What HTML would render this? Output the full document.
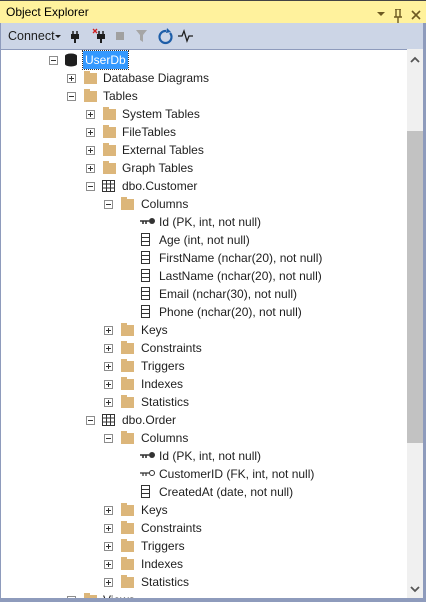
<!DOCTYPE html>
<html><head><style>
*{margin:0;padding:0;box-sizing:border-box}
body{width:426px;height:602px;overflow:hidden;background:#fff;font-family:"Liberation Sans",sans-serif;font-size:12px;color:#1e1e1e;position:relative}
#frame{position:absolute;left:0;top:0;width:426px;height:602px;border:1px solid #8e9bbc;border-top:0}
#title{position:absolute;left:0;top:0;width:426px;height:23px;background:#fff29d;border-top:1px solid #444}
#title span{position:absolute;left:6px;top:4px;font-size:12px;color:#000}
#tb{position:absolute;left:0;top:23px;width:426px;height:26px;background:#ccd5e6}
#tree{position:absolute;left:1px;top:49px;width:406px;height:550px;background:#fff;border-top:1px solid #8e9bbc;overflow:hidden}
#sb{position:absolute;left:407px;top:49px;width:16px;height:550px;background:#f0f0f0}
#thumb{position:absolute;left:407px;top:131px;width:16px;height:312px;background:#c2c2c2}
#bot{position:absolute;left:0;top:598px;width:426px;height:4px;background:#8e9bbc}
.r{position:absolute;height:18px;line-height:18px;white-space:nowrap}
.ex{position:absolute;width:9px;height:9px;border:1px solid #8d8d8d;background:#fff}
.ex:before{content:"";position:absolute;left:1px;top:3px;width:5px;height:1px;background:#333}
.ex.p:after{content:"";position:absolute;left:3px;top:1px;width:1px;height:5px;background:#333}
.fo{position:absolute;width:13px;height:11px;background:#dcb67a}
.fo:before{content:"";position:absolute;left:0;top:-2px;width:6px;height:2px;background:#dcb67a}
.t{position:absolute}
</style></head><body>
<div id="title"><span>Object Explorer</span>
<svg style="position:absolute;left:376px;top:8px" width="46" height="14"><path d="M1 3h8l-4 4z" fill="#6d5a22"/><path d="M19 0h6M20 0v8M24 0v8M18 8h8M22 8v6" stroke="#6d5a22" stroke-width="1.4" fill="none"/><path d="M36 2l8 8M44 2l-8 8" stroke="#6d5a22" stroke-width="1.6"/></svg></div>
<div id="tb">
<span style="position:absolute;left:8px;top:6px;font-size:12.5px;color:#1e1e1e">Connect</span>
<svg style="position:absolute;left:55px;top:12px" width="8" height="5"><path d="M0 0h6l-3 3z" fill="#1e1e1e"/></svg>
<svg style="position:absolute;left:70px;top:4px" width="140" height="18">
<path d="M3 4v4M7 4v4" stroke="#1e1e1e" stroke-width="1.5"/><rect x="1" y="7" width="8" height="5" fill="#1e1e1e"/><rect x="4" y="11" width="2" height="5" fill="#1e1e1e"/>
<path d="M23 2l4 4M27 2l-4 4" stroke="#d02020" stroke-width="1.3"/><path d="M29 4v4M33 4v4" stroke="#1e1e1e" stroke-width="1.5"/><rect x="27" y="7" width="8" height="5" fill="#1e1e1e"/><rect x="30" y="11" width="2" height="5" fill="#1e1e1e"/>
<rect x="46" y="5" width="8" height="8" fill="#a0a0a0"/>
<path d="M66 3h11l-4 5v7l-3-2v-5z" fill="#a6a6a6"/>
<path d="M96 4a6 6 0 1 0 4 2" stroke="#1e5ea8" stroke-width="2.2" fill="none"/><path d="M97 1l4 4-5 1z" fill="#1e5ea8"/>
<path d="M108 9h4l2-5 3 10 2-5h4" stroke="#1e1e1e" stroke-width="1.3" fill="none"/>
</svg></div>
<div id="tree">
<!-- rows injected -->
<div class="ex" style="left:48px;top:6px"></div>
<svg style="position:absolute;left:63px;top:3px" width="14" height="14"><ellipse cx="7" cy="3" rx="6" ry="2.5" fill="#1e1e1e"/><rect x="1" y="3" width="12" height="8" fill="#1e1e1e"/><ellipse cx="7" cy="11" rx="6" ry="2.5" fill="#1e1e1e"/></svg>
<div class="r" style="left:82px;top:1px;background:#3399ff;color:#fff;padding:0 2px;height:18px;outline:1px dotted #333">UserDb</div>

<div class="ex p" style="left:66px;top:24px"></div><div class="fo" style="left:83px;top:23px"></div><div class="r t" style="left:102px;top:19px">Database Diagrams</div>
<div class="ex" style="left:66px;top:42px"></div><div class="fo" style="left:83px;top:41px"></div><div class="r t" style="left:102px;top:37px">Tables</div>
<div class="ex p" style="left:85px;top:60px"></div><div class="fo" style="left:102px;top:59px"></div><div class="r t" style="left:121px;top:55px">System Tables</div>
<div class="ex p" style="left:85px;top:78px"></div><div class="fo" style="left:102px;top:77px"></div><div class="r t" style="left:121px;top:73px">FileTables</div>
<div class="ex p" style="left:85px;top:96px"></div><div class="fo" style="left:102px;top:95px"></div><div class="r t" style="left:121px;top:91px">External Tables</div>
<div class="ex p" style="left:85px;top:114px"></div><div class="fo" style="left:102px;top:113px"></div><div class="r t" style="left:121px;top:109px">Graph Tables</div>
<div class="ex" style="left:85px;top:132px"></div>
<svg style="position:absolute;left:101px;top:130px" width="14" height="13"><rect x="0.5" y="0.5" width="12" height="11" fill="none" stroke="#333"/><path d="M0 4h13M0 8h13M4.5 1v11M8.5 1v11" stroke="#333"/></svg>
<div class="r t" style="left:121px;top:127px">dbo.Customer</div>
<div class="ex" style="left:103px;top:150px"></div><div class="fo" style="left:120px;top:149px"></div><div class="r t" style="left:140px;top:145px">Columns</div>

<svg style="position:absolute;left:139px;top:167px" width="16" height="8"><path d="M0 4h9M3 4v3M6 4v3" stroke="#333" stroke-width="1.6"/><circle cx="12" cy="4" r="3" fill="#333"/></svg>
<div class="r t" style="left:158px;top:163px">Id (PK, int, not null)</div>
<div class="r t" style="left:158px;top:181px">Age (int, not null)</div>
<div class="r t" style="left:158px;top:199px">FirstName (nchar(20), not null)</div>
<div class="r t" style="left:158px;top:217px">LastName (nchar(20), not null)</div>
<div class="r t" style="left:158px;top:235px">Email (nchar(30), not null)</div>
<div class="r t" style="left:158px;top:253px">Phone (nchar(20), not null)</div>

<div class="ex p" style="left:103px;top:276px"></div><div class="fo" style="left:120px;top:275px"></div><div class="r t" style="left:140px;top:271px">Keys</div>
<div class="ex p" style="left:103px;top:294px"></div><div class="fo" style="left:120px;top:293px"></div><div class="r t" style="left:140px;top:289px">Constraints</div>
<div class="ex p" style="left:103px;top:312px"></div><div class="fo" style="left:120px;top:311px"></div><div class="r t" style="left:140px;top:307px">Triggers</div>
<div class="ex p" style="left:103px;top:330px"></div><div class="fo" style="left:120px;top:329px"></div><div class="r t" style="left:140px;top:325px">Indexes</div>
<div class="ex p" style="left:103px;top:348px"></div><div class="fo" style="left:120px;top:347px"></div><div class="r t" style="left:140px;top:343px">Statistics</div>
<div class="ex" style="left:85px;top:366px"></div>
<svg style="position:absolute;left:101px;top:364px" width="14" height="13"><rect x="0.5" y="0.5" width="12" height="11" fill="none" stroke="#333"/><path d="M0 4h13M0 8h13M4.5 1v11M8.5 1v11" stroke="#333"/></svg>
<div class="r t" style="left:121px;top:361px">dbo.Order</div>
<div class="ex" style="left:103px;top:384px"></div><div class="fo" style="left:120px;top:383px"></div><div class="r t" style="left:140px;top:379px">Columns</div>
<svg style="position:absolute;left:139px;top:401px" width="16" height="8"><path d="M0 4h9M3 4v3M6 4v3" stroke="#333" stroke-width="1.6"/><circle cx="12" cy="4" r="3" fill="#333"/></svg>
<div class="r t" style="left:158px;top:397px">Id (PK, int, not null)</div>
<svg style="position:absolute;left:139px;top:419px" width="16" height="8"><path d="M0 4h9M3 4v3M6 4v3" stroke="#333" stroke-width="1.2"/><circle cx="12" cy="4" r="2.5" fill="#fff" stroke="#333"/></svg>
<div class="r t" style="left:158px;top:415px">CustomerID (FK, int, not null)</div>
<div class="r t" style="left:158px;top:433px">CreatedAt (date, not null)</div>
<div class="ex p" style="left:103px;top:456px"></div><div class="fo" style="left:120px;top:455px"></div><div class="r t" style="left:140px;top:451px">Keys</div>
<div class="ex p" style="left:103px;top:474px"></div><div class="fo" style="left:120px;top:473px"></div><div class="r t" style="left:140px;top:469px">Constraints</div>
<div class="ex p" style="left:103px;top:492px"></div><div class="fo" style="left:120px;top:491px"></div><div class="r t" style="left:140px;top:487px">Triggers</div>
<div class="ex p" style="left:103px;top:510px"></div><div class="fo" style="left:120px;top:509px"></div><div class="r t" style="left:140px;top:505px">Indexes</div>
<div class="ex p" style="left:103px;top:528px"></div><div class="fo" style="left:120px;top:527px"></div><div class="r t" style="left:140px;top:523px">Statistics</div>
<div class="ex p" style="left:66px;top:546px"></div><div class="fo" style="left:83px;top:545px"></div><div class="r t" style="left:102px;top:541px">Views</div>
</div>
<svg style="position:absolute;left:141px;top:229px" width="10" height="100">
<g fill="none" stroke="#333"><rect x="0.5" y="4.5" width="8" height="12"/><path d="M1 8.5h7M1 12.5h7"/>
<rect x="0.5" y="22.5" width="8" height="12"/><path d="M1 26.5h7M1 30.5h7"/>
<rect x="0.5" y="40.5" width="8" height="12"/><path d="M1 44.5h7M1 48.5h7"/>
<rect x="0.5" y="58.5" width="8" height="12"/><path d="M1 62.5h7M1 66.5h7"/>
<rect x="0.5" y="76.5" width="8" height="12"/><path d="M1 80.5h7M1 84.5h7"/></g></svg>
<svg style="position:absolute;left:141px;top:481px" width="10" height="20"><g fill="none" stroke="#333"><rect x="0.5" y="4.5" width="8" height="12"/><path d="M1 8.5h7M1 12.5h7"/></g></svg>
<div id="sb"></div><div id="thumb"></div>
<svg style="position:absolute;left:410px;top:56px" width="10" height="8"><path d="M1 6l4-4 4 4" stroke="#555" stroke-width="1.8" fill="none"/></svg>
<svg style="position:absolute;left:410px;top:585px" width="10" height="8"><path d="M1 2l4 4 4-4" stroke="#555" stroke-width="1.8" fill="none"/></svg>
<div style="position:absolute;left:423px;top:23px;width:3px;height:579px;background:#8e9bbc"></div>
<div style="position:absolute;left:0;top:23px;width:1px;height:579px;background:#8e9bbc"></div>
<div id="bot"></div>
</body></html>
